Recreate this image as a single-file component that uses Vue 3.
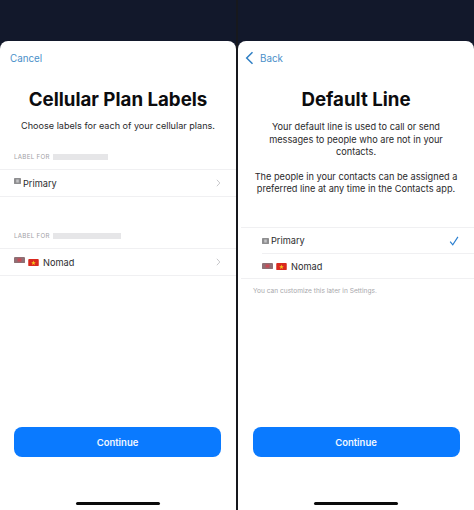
<template>
  <div class="screens">
    <section class="pane pane-left">
      <div class="card">
        <div class="nav"><span class="nav-link">Cancel</span></div>
        <h1 class="title">Cellular Plan Labels</h1>
        <p class="lead">Choose labels for each of your cellular plans.</p>

        <div v-for="plan in plans" :key="plan.name" class="plan">
          <div class="plan-label">
            <span>LABEL FOR</span>
            <i class="redacted" :style="{ width: plan.redacted + 'px' }"></i>
          </div>
          <div class="plan-row">
            <svg class="sim" :class="{ 'sim-wide': plan.flag }" viewBox="0 0 10 7" preserveAspectRatio="none" aria-hidden="true">
              <rect width="10" height="7" rx="1" :fill="plan.flag ? '#8f6f74' : '#8e8e90'" />
              <rect x="3.2" y="1.7" width="3.6" height="3.6" :fill="plan.flag ? '#c94a55' : '#c4c4c6'" />
            </svg>
            <svg v-if="plan.flag" class="flag" viewBox="0 0 12 8" aria-hidden="true">
              <rect width="12" height="8" rx="1" fill="#d9281e" />
              <path d="M6 1.6l.7 2h2l-1.6 1.2.6 2L6 5.6 4.3 6.8l.6-2L3.3 3.6h2z" fill="#f7c51e" />
            </svg>
            <span class="plan-name">{{ plan.name }}</span>
            <svg class="chevron" viewBox="0 0 7 11" aria-hidden="true">
              <path d="M1.2 1l4.2 4.5-4.2 4.5" />
            </svg>
          </div>
        </div>

        <button class="continue">Continue</button>
        <div class="home-bar"></div>
      </div>
    </section>

    <div class="divider"></div>

    <section class="pane">
      <div class="card">
        <div class="nav nav-back">
          <svg class="back" viewBox="0 0 9 14" aria-hidden="true">
            <path d="M7.5 1.2L1.7 7l5.8 5.8" />
          </svg>
          <span class="nav-link">Back</span>
        </div>
        <h1 class="title">Default Line</h1>
        <p class="body">Your default line is used to call or send messages to people who are not in your contacts.</p>
        <p class="body body-second">The people in your contacts can be assigned a preferred line at any time in the Contacts app.</p>

        <div class="lines">
          <div class="line">
            <svg class="sim" viewBox="0 0 10 7" preserveAspectRatio="none" aria-hidden="true">
              <rect width="10" height="7" rx="1" fill="#8e8e90" />
              <rect x="3.2" y="1.7" width="3.6" height="3.6" fill="#c4c4c6" />
            </svg>
            <span class="plan-name">Primary</span>
            <svg class="check" viewBox="0 0 13 13" aria-hidden="true">
              <path d="M1.5 7.2l3.4 4.3L11.6 1.2" />
            </svg>
          </div>
          <div class="line">
            <svg class="sim sim-wide" viewBox="0 0 10 7" preserveAspectRatio="none" aria-hidden="true">
              <rect width="10" height="7" rx="1" fill="#8f6f74" />
              <rect x="3.2" y="1.7" width="3.6" height="3.6" fill="#c94a55" />
            </svg>
            <svg class="flag" viewBox="0 0 12 8" aria-hidden="true">
              <rect width="12" height="8" rx="1" fill="#d9281e" />
              <path d="M6 1.6l.7 2h2l-1.6 1.2.6 2L6 5.6 4.3 6.8l.6-2L3.3 3.6h2z" fill="#f7c51e" />
            </svg>
            <span class="plan-name">Nomad</span>
          </div>
        </div>
        <p class="note">You can customize this later in Settings.</p>

        <button class="continue">Continue</button>
        <div class="home-bar"></div>
      </div>
    </section>
  </div>
</template>

<script setup>
const plans = [
  { name: "Primary", redacted: 55, flag: false },
  { name: "Nomad", redacted: 68, flag: true },
];
</script>

<style scoped>
.screens {
  display: grid;
  grid-template-columns: 236px 2px 236px;
  width: 474px;
  height: 510px;
  overflow: hidden;
  font-family: Inter, "Liberation Sans", sans-serif;
  background: #12182b;
}
.divider {
  background: #17181d;
}
.pane {
  display: flex;
  flex-direction: column;
  padding-top: 41px;
  background: #12182b;
}
.card {
  flex: 1;
  display: flex;
  flex-direction: column;
  background: #fff;
  border-radius: 8px 8px 0 0;
}
.nav {
  height: 34px;
  padding-left: 10px;
  display: flex;
  align-items: center;
}
.nav-back {
  padding-left: 7px;
  gap: 6px;
}
.nav-link {
  font-size: 9.8px;
  color: #4a8fc9;
}
.back {
  width: 9px;
  height: 14px;
}
.back path {
  fill: none;
  stroke: #2f7fc4;
  stroke-width: 1.5;
}
.title {
  margin: 13px 0 0;
  font-size: 18.7px;
  line-height: 24px;
  font-weight: 700;
  text-align: center;
  color: #0c0c0e;
}
.lead {
  margin: 7px 0 17px;
  font-size: 9.1px;
  line-height: 14px;
  text-align: center;
  color: #2a2a2c;
}
.plan {
  margin-bottom: 32px;
}
.plan-label {
  display: flex;
  align-items: center;
  gap: 3px;
  height: 13px;
  margin-bottom: 6px;
  padding-left: 14px;
  font-size: 6.2px;
  letter-spacing: 0.3px;
  color: #a2a2a6;
}
.redacted {
  height: 6px;
  background: #e6e6e8;
}
.plan-row {
  display: flex;
  align-items: center;
  height: 26px;
  padding: 0 14px;
  border-top: 1px solid #f0f0f2;
  border-bottom: 1px solid #f0f0f2;
}
.sim {
  flex-shrink: 0;
  width: 7px;
  height: 6px;
  margin-right: 2px;
  margin-top: -5px;
}
.sim-wide {
  width: 11px;
  height: 6px;
  margin-right: 3px;
}
.flag {
  flex-shrink: 0;
  width: 11px;
  height: 7px;
  margin-right: 4px;
}
.plan-name {
  font-size: 9.2px;
  color: #2c2c2e;
}
.chevron {
  width: 5px;
  height: 8px;
  margin-left: auto;
  margin-right: 1px;
}
.chevron path {
  fill: none;
  stroke: #c4c4c7;
  stroke-width: 1.3;
}
.body {
  margin: 9px 22px 0;
  font-size: 9.2px;
  line-height: 12.5px;
  text-align: center;
  color: #2a2a2c;
}
.body-second {
  margin: 12px 14px 0;
}
.lines {
  margin: 31.5px 0 0 3px;
  border-top: 1px solid #f0f0f2;
  border-bottom: 1px solid #f0f0f2;
}
.line {
  display: flex;
  align-items: center;
  height: 25px;
  margin-left: 21px;
  padding-right: 15px;
}
.line + .line {
  height: 24px;
  border-top: 1px solid #f0f0f2;
}
.line .sim {
  margin-top: 0;
}
.check {
  width: 10px;
  height: 10px;
  margin-left: auto;
}
.check path {
  fill: none;
  stroke: #2a7fd0;
  stroke-width: 1.5;
}
.note {
  margin: 8px 0 0 15px;
  font-size: 6.6px;
  line-height: 9px;
  color: #a8a8ac;
}
.continue {
  align-self: center;
  width: 207px;
  height: 30px;
  margin-top: auto;
  border: 0;
  border-radius: 8px;
  background: #0a7aff;
  color: #f2f7ff;
  font-family: inherit;
  font-size: 9.5px;
  font-weight: 600;
}
.pane-left .continue {
  align-self: flex-start;
  margin-left: 14px;
}
.home-bar {
  align-self: center;
  width: 84px;
  height: 3px;
  margin: 45px 0 5px;
  border-radius: 2px;
  background: #0b0b0b;
}
</style>
